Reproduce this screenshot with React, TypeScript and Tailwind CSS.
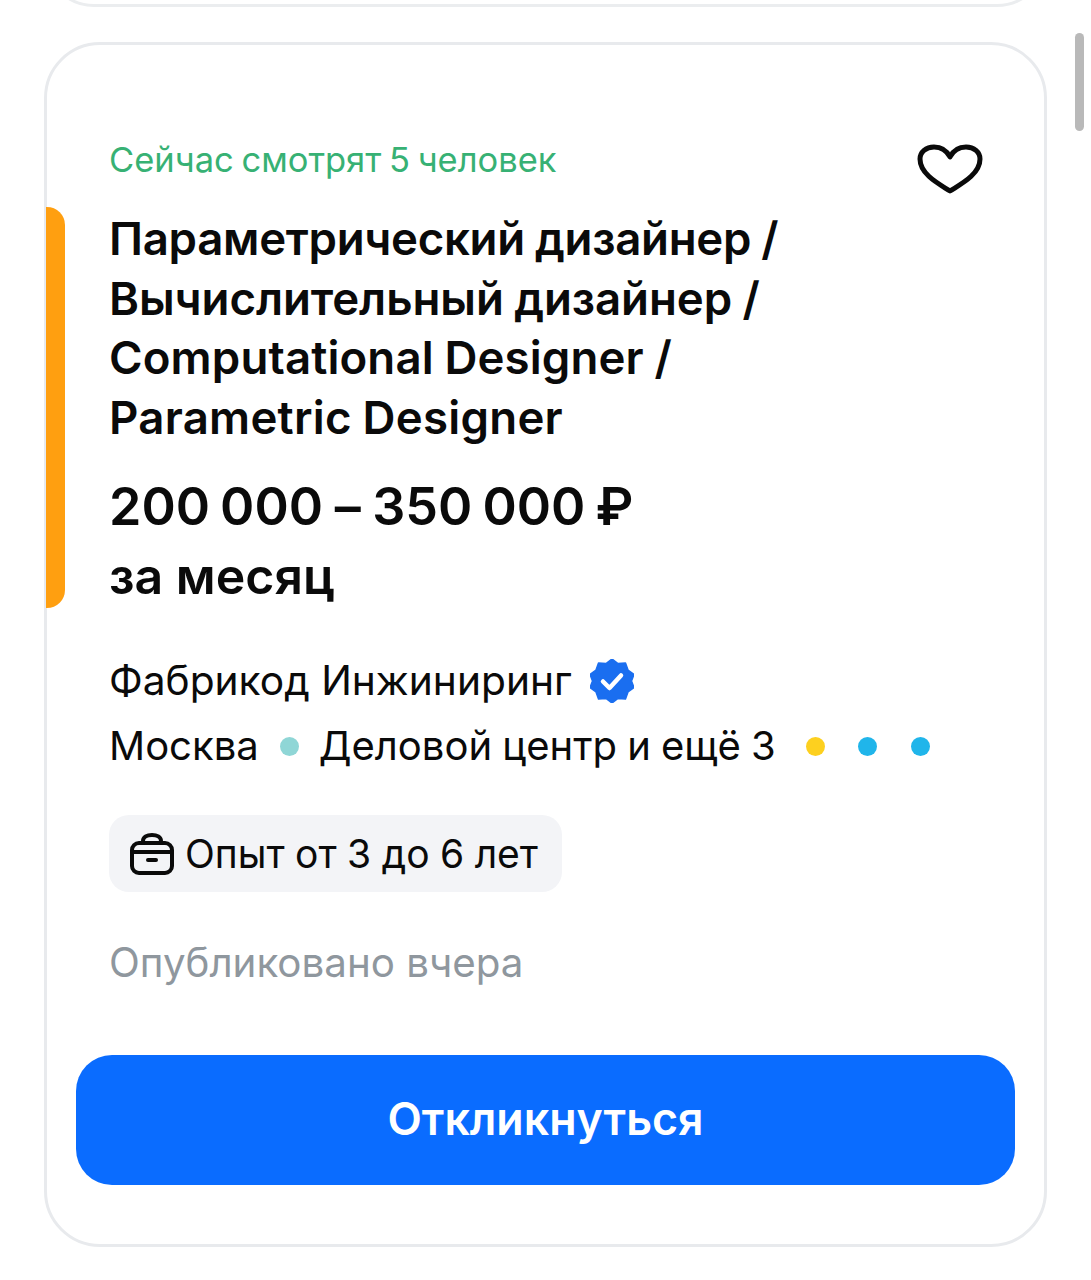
import React from "react";

const Dot = ({ c }: { c: string }) => <span className={`block h-[19px] w-[19px] rounded-full ${c}`} />;

export default function App() {
  return (
    <div className="relative h-[1280px] w-[1091px] overflow-hidden bg-white font-['Inter','Liberation_Sans',sans-serif] text-[#0a0a0a]">
      <div className="ml-[44px] mt-[-93px] h-[100px] w-[1003px] rounded-[56px] border-[3px] border-[#ebedef]" />
      <div className="relative ml-[44px] mt-[35px] flex h-[1205px] w-[1003px] flex-col rounded-[56px] border-[3px] border-[#e8eaed] bg-white pl-[62px] pt-[95px]">
        <div className="absolute left-[-1px] top-[162px] h-[401px] w-[19px] rounded-r-[18px] bg-[#ff9f10]" />
        <div className="flex items-start justify-between pr-[61px]">
          <div className="text-[34.5px] leading-[40px] text-[#37b174] [word-spacing:-2px]">Сейчас смотрят 5 человек</div>
          <svg className="mt-[4px]" width="66" height="50" viewBox="0 0 66 50" fill="none">
            <path d="M33 47 C24 41 3 31 3 15 C3 8 9 3 17 3 C24 3 30 7 33 13 C36 7 42 3 49 3 C57 3 63 8 63 15 C63 31 42 41 33 47 Z" stroke="#0a0a0a" strokeWidth="5" strokeLinejoin="round" />
          </svg>
        </div>
        <h1 className="mt-[15px] text-[45.6px] font-semibold leading-[59.5px] [word-spacing:-1px]">
          <div className="tracking-[-0.3px]">Параметрический дизайнер /</div>
          <div className="tracking-[-0.08px]">Вычислительный дизайнер /</div>
          <div className="tracking-[0.13px]">Computational Designer /</div>
          <div className="tracking-[0.26px]">Parametric Designer</div>
        </h1>
        <div className="mt-[29px] text-[52px] font-semibold leading-[62px] [word-spacing:-3px]">
          200 000 <span className="mx-[1.5px]">–</span> 350 000 ₽
        </div>
        <div className="mt-[7px] text-[50px] font-semibold leading-[62px]">за месяц</div>
        <div className="mt-[50px] flex items-center gap-[18px]">
          <span className="text-[40.7px] leading-[48px]">Фабрикод Инжиниринг</span>
          <svg width="44" height="44" viewBox="0 0 44 44">
            <path d="M22 0 L28 4.5 L35.5 4 L38 11 L44 15.5 L41.5 22 L44 28.5 L38 33 L35.5 40 L28 39.5 L22 44 L16 39.5 L8.5 40 L6 33 L0 28.5 L2.5 22 L0 15.5 L6 11 L8.5 4 L16 4.5 Z" fill="#1a6ef0" stroke="#1a6ef0" strokeWidth="1.5" strokeLinejoin="round" />
            <path d="M13 22.5 L19.5 29 L31 16.5" fill="none" stroke="#ffffff" strokeWidth="4.5" strokeLinecap="round" strokeLinejoin="round" />
          </svg>
        </div>
        <div className="mt-[17px] flex items-center text-[40px] leading-[48px] [word-spacing:-1px]">
          <span>Москва</span>
          <span className="ml-[21px] mr-[20px]"><Dot c="bg-[#8fd6d6]" /></span>
          <span>Деловой центр и ещё 3</span>
          <span className="ml-[30px] flex gap-[33.5px]">
            <Dot c="bg-[#fdd01f]" />
            <Dot c="bg-[#20b5ea]" />
            <Dot c="bg-[#20b5ea]" />
          </span>
        </div>
        <div className="mt-[45px] flex h-[77px] w-[453px] items-center rounded-[20px] bg-[#f3f4f7] pl-[21px]">
          <svg width="44" height="44" viewBox="0 0 44 44" fill="none" stroke="#0a0a0a" strokeWidth="4" strokeLinecap="round" strokeLinejoin="round">
            <rect x="2" y="11" width="40" height="30" rx="7" />
            <path d="M13 11 V9 C13 5 17 3 22 3 C27 3 31 5 31 9 V11" />
            <path d="M2 20 H42" />
            <path d="M18 28 H26" />
          </svg>
          <span className="ml-[11px] text-[39px] leading-[48px] [word-spacing:-0.5px]">Опыт от 3 до 6 лет</span>
        </div>
        <div className="mt-[47px] text-[40.3px] leading-[48px] text-[#8f979e]">Опубликовано вчера</div>
        <button className="ml-[-33px] mt-[68px] h-[130px] w-[939px] rounded-[36px] bg-[#0a6cff] text-[44.7px] font-semibold text-white">
          Откликнуться
        </button>
      </div>
      <div className="absolute left-[1075px] top-[33px] h-[98px] w-[9px] rounded-full bg-[#b9b9b9]" />
    </div>
  );
}
